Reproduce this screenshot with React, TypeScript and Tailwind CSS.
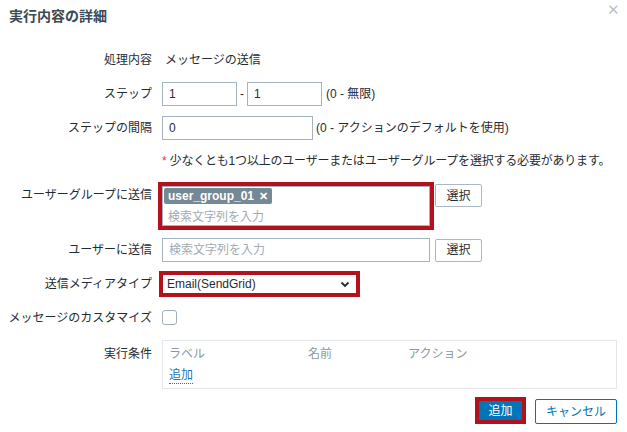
import { ReactNode } from "react";

const FONT = "[font-family:'Liberation_Sans','Noto_Sans_CJK_JP',sans-serif]";

const Row = ({
  label,
  children,
  className = "",
  labelClass = "",
}: {
  label?: string;
  children: ReactNode;
  className?: string;
  labelClass?: string;
}) => (
  <div className={`flex ${className}`}>
    <div className={`w-[152px] shrink-0 text-right text-[12px] text-[#1f2c33] ${labelClass}`}>
      {label}
    </div>
    <div className="ml-[10px] flex flex-1 items-center">{children}</div>
  </div>
);

// red highlight frame drawn over a field
const Mark = ({ inset }: { inset: string }) => (
  <span className={`pointer-events-none absolute ${inset} border-[4px] border-[#b3121d]`} />
);

const SelectButton = ({ className = "" }: { className?: string }) => (
  <button
    className={`h-[23px] w-[47px] rounded-[2px] border border-[#a9b8c2] bg-white text-[12px] text-[#1f2c33] ${className}`}
  >
    選択
  </button>
);

const App = () => {
  return (
    <div className={`relative h-[432px] w-[627px] overflow-hidden bg-white ${FONT}`}>
      <div className="flex h-[26px] items-end pl-[9px]">
        <h1 className="text-[14px] leading-[20px] font-bold text-[#3b4a55]">実行内容の詳細</h1>
      </div>
      <button className="absolute right-[7px] top-[2px] text-[15px] leading-[15px] text-[#b8c3cb]">
        ✕
      </button>

      <div className="flex flex-col pr-[10px]">
        <Row label="処理内容" className="mt-[24px] h-[20px] items-center">
          <span className="pl-[3px] text-[12px] text-[#1f2c33]">メッセージの送信</span>
        </Row>

        <Row label="ステップ" className="mt-[12px] h-[24px] items-center">
          <input
            readOnly
            value="1"
            className="h-[24px] w-[75px] border border-[#a4b3bd] px-[6px] text-[12px] text-[#1f2c33] outline-none"
          />
          <span className="mx-[3px] text-[12px] text-[#1f2c33]">-</span>
          <input
            readOnly
            value="1"
            className="h-[24px] w-[75px] border border-[#a4b3bd] px-[6px] text-[12px] text-[#1f2c33] outline-none"
          />
          <span className="ml-[4px] text-[12px] text-[#1f2c33]">(0 - 無限)</span>
        </Row>

        <Row label="ステップの間隔" className="mt-[10px] h-[24px] items-center">
          <input
            readOnly
            value="0"
            className="h-[24px] w-[151px] border border-[#a4b3bd] px-[6px] text-[12px] text-[#1f2c33] outline-none"
          />
          <span className="ml-[3px] text-[12px] text-[#1f2c33]">(0 - アクションのデフォルトを使用)</span>
        </Row>

        <Row className="mt-[12px] h-[18px] items-center">
          <span className="whitespace-nowrap text-[12px] tracking-[-0.2px] text-[#1f2c33]">
            <span className="text-[#e33734]">*</span> 少なくとも1つ以上のユーザーまたはユーザーグループを選択する必要があります。
          </span>
        </Row>

        <Row
          label="ユーザーグループに送信"
          className="mt-[14px] items-start"
          labelClass="leading-[23px]"
        >
          <div className="flex items-start">
            <div className="relative mt-[2px] flex h-[40px] w-[268px] flex-col items-start border border-[#a4b3bd] px-[1px] pt-[1px] leading-none">
              <span className="flex h-[16px] items-center rounded-[2px] bg-[#768893] px-[4px] text-[12px] font-bold text-white">
                user_group_01
                <span className="ml-[5px] text-[11px]">✕</span>
              </span>
              <div className="mt-[5px] pl-[4px] text-[12px] leading-[16px] text-[#a3abb0]">検索文字列を入力</div>
              <Mark inset="-inset-[5px]" />
            </div>
            <SelectButton className="ml-[5px]" />
          </div>
        </Row>

        <Row label="ユーザーに送信" className="mt-[12px] h-[24px] items-center">
          <div className="flex h-[24px] w-[268px] items-center border border-[#a4b3bd] px-[6px] text-[12px] text-[#a3abb0]">
            検索文字列を入力
          </div>
          <SelectButton className="ml-[5px] h-[22px]" />
        </Row>

        <Row label="送信メディアタイプ" className="mt-[12px] h-[20px] items-center">
          <div className="relative flex h-[20px] w-[195px] items-center justify-between border border-[#a4b3bd] pl-[4px] pr-[6px]">
            <span className="text-[12px] text-[#1f2c33]">Email(SendGrid)</span>
            <svg width="10" height="7" viewBox="0 0 10 7" fill="none">
              <path d="M1.5 1.5 5 5l3.5-3.5" stroke="#1f2c33" strokeWidth="1.8" />
            </svg>
            <Mark inset="-inset-[4px]" />
          </div>
        </Row>

        <Row label="メッセージのカスタマイズ" className="mt-[16px] h-[15px] items-center">
          <span className="h-[15px] w-[15px] rounded-[3px] border border-[#9fb0bb] bg-white" />
        </Row>

        <Row label="実行条件" className="mt-[15px] items-start" labelClass="pt-[6px] leading-[16px]">
          <div className="h-[49px] flex-1 border border-[#e3e7ea] px-[6px] pt-[5px] text-[12px]">
            <div className="flex text-[#8d979e] leading-[17px]">
              <span className="w-[139px]">ラベル</span>
              <span className="w-[100px]">名前</span>
              <span>アクション</span>
            </div>
            <a className="mt-[5px] inline-block border-b border-dotted border-[#1f75b8] leading-[15px] text-[#1f75b8]">
              追加
            </a>
          </div>
        </Row>

        <div className="mt-[10px] flex justify-end">
          <div className="relative mt-[2px] flex h-[19px] w-[43px] items-center justify-center bg-[#0275b8] text-[12px] text-white">
            追加
            <Mark inset="-inset-[4px]" />
          </div>
          <button className="ml-[13px] h-[25px] w-[82px] rounded-[2px] border border-[#0275b8] bg-white text-[12px] text-[#0275b8]">
            キャンセル
          </button>
        </div>
      </div>
    </div>
  );
};

export default App;
